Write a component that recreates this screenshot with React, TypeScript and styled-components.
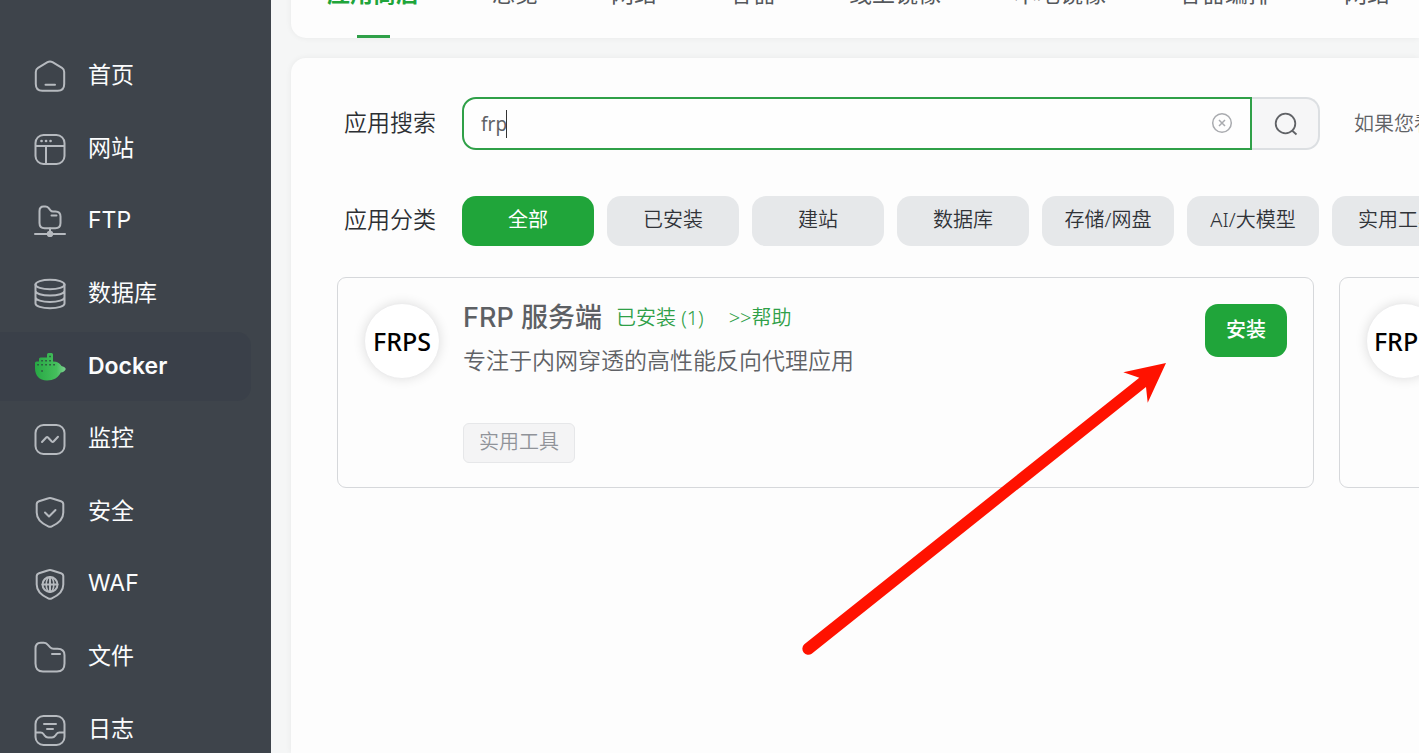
import React from 'react';
import styled, { createGlobalStyle, css } from 'styled-components';

const GlobalStyle = createGlobalStyle`
  * { box-sizing: border-box; }
  html, body { margin: 0; overflow: hidden; }
  body {
    background: #f5f6f6;
    color: #2c2f33;
    font-family: Inter, 'Noto Sans CJK SC', sans-serif;
  }
  button, input { font: inherit; }
  a { text-decoration: none; color: inherit; }
`;

const uiFont = css`
  font-family: 'Noto Sans', 'Noto Sans CJK SC', sans-serif;
`;

const Page = styled.div`
  display: flex;
  height: 100vh;
  overflow: hidden;
`;

const Sidebar = styled.nav`
  flex: 0 0 271px;
  display: flex;
  background: #3e444b;
`;

const Menu = styled.ul`
  flex: 1;
  display: flex;
  flex-direction: column;
  margin: 40px 20px -13px 0;
  padding: 0;
  list-style: none;
`;

const MenuItem = styled.li`
  flex: 1 0 68px;
  display: flex;
  padding: 2px 0;
`;

const MenuLink = styled.a<{ $active?: boolean }>`
  flex: 1;
  display: flex;
  align-items: center;
  gap: 22px;
  padding-left: 34px;
  border-radius: 0 14px 14px 0;
  background: ${(p) => (p.$active ? '#3a4049' : 'transparent')};
  color: #fbfcfd;
  font-size: 23px;
  line-height: 34px;
  font-weight: ${(p) => (p.$active ? 600 : 400)};
`;

const MenuText = styled.span`
  padding-bottom: 2px;
`;

const MenuSvg = styled.svg`
  flex: none;
  width: 32px;
  height: 32px;
  fill: none;
  stroke: #b6babf;
  stroke-width: 2;
  stroke-linecap: round;
  stroke-linejoin: round;
`;

const Main = styled.main`
  flex: 1;
  min-width: 0;
  display: flex;
  flex-direction: column;
  gap: 20px;
  padding-left: 20px;
  overflow: hidden;
`;

const TabBar = styled.div`
  flex: none;
  display: flex;
  gap: 1px;
  height: 88px;
  margin-top: -50px;
  border-radius: 0 0 0 15px;
  background: #fdfdfd;
  box-shadow: 0 0 6px rgba(0, 0, 0, 0.06);
`;

const Tab = styled.button<{ $active?: boolean }>`
  position: relative;
  flex: none;
  padding: 0 36px;
  border: 0;
  background: none;
  color: ${(p) => (p.$active ? '#20a53a' : '#55585c')};
  font-size: 23px;
  line-height: 34px;
  font-weight: ${(p) => (p.$active ? 700 : 400)};
  white-space: nowrap;

  &::after {
    content: '';
    position: absolute;
    bottom: 0;
    left: calc(50% - 16px);
    width: 33px;
    height: 3px;
    background: ${(p) => (p.$active ? '#2fa048' : 'transparent')};
  }
`;

const Panel = styled.section`
  flex: 1;
  display: flex;
  flex-direction: column;
  padding: 39px 0 0 46px;
  border-radius: 15px 0 0 0;
  background: #fdfdfd;
  box-shadow: 0 0 6px rgba(0, 0, 0, 0.06);
`;

const FilterRow = styled.div`
  flex: none;
  display: flex;
  align-items: center;
  padding-left: 7px;

  & + & {
    margin-top: 46px;
  }
`;

const RowLabel = styled.label`
  flex: none;
  width: 118px;
  padding-bottom: 2px;
  font-size: 23px;
  line-height: 34px;
  font-weight: 350;
`;

const SearchBox = styled.div`
  flex: 1;
  display: flex;
  height: 53px;
`;

const Field = styled.div`
  position: relative;
  flex: 1;
  display: flex;
`;

const SearchInput = styled.input`
  ${uiFont}
  flex: 1;
  min-width: 0;
  padding: 0 60px 0 17px;
  border: 2px solid #2fa048;
  border-radius: 14px 0 0 14px;
  outline: 0;
  background: #fefefe;
  color: #606266;
  font-size: 19px;
  caret-color: transparent;
`;

const Caret = styled.span`
  position: absolute;
  left: 44px;
  top: 13px;
  width: 1px;
  height: 28px;
  background: #333;
`;

const ClearButton = styled.button`
  position: absolute;
  right: 19px;
  top: 15px;
  width: 22px;
  height: 22px;
  padding: 0;
  border: 0;
  background: none;
  color: #a9abaf;
`;

const SearchButton = styled.button`
  flex: 0 0 68px;
  display: flex;
  align-items: center;
  justify-content: center;
  padding: 0;
  border: 2px solid #dcdfe2;
  border-left: 0;
  border-radius: 0 14px 14px 0;
  background: #f6f6f7;
  color: #606266;
`;

const GlyphSvg = styled.svg`
  display: block;
  fill: none;
  stroke: currentColor;
`;

const Hint = styled.span`
  flex: 0 0 65px;
  margin-left: 34px;
  overflow: hidden;
  white-space: nowrap;
  color: #606266;
  font-size: 20px;
  line-height: 34px;
  font-weight: 350;
`;

const Categories = styled.div`
  flex: 1;
  min-width: 0;
  display: flex;
  gap: 13px;
  overflow: hidden;
`;

const Category = styled.button<{ $active?: boolean }>`
  ${uiFont}
  flex: 0 0 132px;
  height: 50px;
  padding: 0 0 2px;
  border: 0;
  border-radius: 14px;
  background: ${(p) => (p.$active ? '#20a53a' : '#e6e8ea')};
  color: ${(p) => (p.$active ? '#fff' : '#303338')};
  font-size: 20px;
  line-height: 28px;
  font-weight: ${(p) => (p.$active ? 400 : 350)};
`;

const Cards = styled.div`
  display: grid;
  grid-auto-flow: column;
  grid-auto-columns: calc(100% - 105px);
  gap: 25px;
  margin-top: 31px;
`;

const Card = styled.article`
  position: relative;
  display: flex;
  align-items: flex-start;
  gap: 23px;
  min-height: 211px;
  padding: 23px 26px 24px;
  border: 1px solid #d6d8db;
  border-radius: 9px;
`;

const Logo = styled.div`
  flex: none;
  display: flex;
  align-items: center;
  justify-content: center;
  width: 76px;
  height: 76px;
  margin-top: 2px;
  border: 1px solid #ededee;
  border-radius: 50%;
  background: #fff;
  box-shadow: 0 0 12px rgba(0, 0, 0, 0.12);
  color: #000;
  font-family: 'Noto Sans', sans-serif;
  font-size: 25px;
  line-height: 34px;
  font-weight: 500;
`;

const CardBody = styled.div`
  flex: 1;
  min-width: 0;
`;

const TitleRow = styled.div`
  display: flex;
  align-items: center;
  height: 34px;
`;

const Title = styled.h2`
  margin: 0 14px 0 0;
  color: #5d6064;
  font-size: 27px;
  line-height: 34px;
  font-weight: 500;
  white-space: nowrap;
`;

const GreenLink = styled.a`
  ${uiFont}
  margin-right: 25px;
  color: #2fa048;
  font-size: 20px;
  line-height: 28px;
  font-weight: 350;
  white-space: nowrap;
`;

const Description = styled.p`
  margin: 9px 0 45px;
  color: #606266;
  font-size: 23px;
  line-height: 34px;
  font-weight: 350;
  white-space: nowrap;
`;

const Tag = styled.span`
  display: inline-block;
  padding: 4px 15px 6px;
  border: 1px solid #e6e7e9;
  border-radius: 6px;
  background: #f4f4f5;
  color: #909399;
  font-size: 20px;
  line-height: 28px;
  font-weight: 350;
`;

const InstallButton = styled.button`
  flex: none;
  width: 82px;
  height: 53px;
  margin-top: 3px;
  padding: 0 0 2px;
  border: 0;
  border-radius: 13px;
  background: #20a53a;
  color: #fff;
  font-size: 20px;
  line-height: 28px;
  font-weight: 500;
`;

const ArrowSvg = styled.svg`
  position: absolute;
  right: 143px;
  top: 82px;
  width: 370px;
  height: 300px;
  pointer-events: none;
`;

const icons: Record<string, React.ReactNode> = {
  home: (
    <>
      <path d="M13.5 2.2 4 7.8C2.2 8.9 1.8 10 1.8 12v12c0 4.500 2 6.800 6.500 6.800h15.400c4.500 0 6.500-2.300 6.500-6.800V12c0-2-.4-3.100-2.200-4.200l-9.500-5.600c-1.800-1-3.200-1-5 0Z" />
      <path d="M11.500 24.800h9.500" />
    </>
  ),
  site: (
    <>
      <rect x="1.500" y="2" width="29" height="29" rx="8" />
      <path d="M2 13h28M12 13v17.500" />
      <path d="M7.500 8h.1M12 8h.1M16.500 8h.1" strokeWidth="2.600" />
    </>
  ),
  ftp: (
    <>
      <path d="M5.500 6c0-3 1.300-4.500 4-4.500h2c1.300 0 2.200.4 3 1.400l2 2.400c.7.900 1.400 1.200 2.500 1.200h2.500c3.600 0 5 1.600 5 5v6.500c0 3.600-1.600 5.200-5.200 5.200H10.700c-3.600 0-5.200-1.600-5.200-5.200Z" />
      <path d="M17.500 10.500h5M16 23.500V28M1 29h30" />
      <circle cx="16" cy="29" r="2.200" fill="#b6babf" />
    </>
  ),
  database: (
    <>
      <ellipse cx="16" cy="6.500" rx="14.500" ry="4.800" />
      <path d="M1.500 6.500v19c0 2.700 6.500 4.800 14.500 4.800s14.500-2.100 14.500-4.800v-19M1.500 12.800c0 2.700 6.500 4.800 14.500 4.800s14.500-2.100 14.500-4.800M1.500 19.200c0 2.700 6.500 4.800 14.500 4.800s14.500-2.100 14.500-4.800" />
    </>
  ),
  docker: (
    <>
      <defs>
        <linearGradient id="whale" x1="0" y1="0" x2="1" y2="0">
          <stop offset="0" stopColor="#27a844" />
          <stop offset="0.700" stopColor="#45bf5c" />
          <stop offset="1" stopColor="#7fd093" />
        </linearGradient>
      </defs>
      <path
        d="M1 12q0-1.500 1.500-1.500H5V8q0-1.500 1.500-1.500H13V3.500Q13 2 14.500 2h3Q19 2 19 3.500v7l3 .2c2.500.8 4.500 2.300 5.500 4.300 2 .4 3.500 1.300 4.300 3-1 2.200-2.500 3.200-5 3.500C24.500 26.500 19.500 29.500 13 29.500 5 29.500 1 24.500 1 17Z"
        fill="url(#whale)"
        stroke="none"
      />
      <path
        d="M4 13.800h.1M8 13.800h.1M12 13.800h.1M16 13.800h.1M20 13.800h.1M8 9.800h.1M12 9.800h.1M16 9.800h.1M16 5.500h.1M8 20h.1"
        stroke="#2d5540"
        strokeWidth="1.600"
        strokeLinecap="square"
      />
    </>
  ),
  monitor: (
    <>
      <rect x="1.500" y="2" width="29" height="29" rx="8" />
      <path d="m8 19 4.200-4.500c.6-.6 1.200-.6 1.800 0l3.800 4c.6.6 1.200.6 1.800 0l4.400-4.700" />
    </>
  ),
  shield: (
    <>
      <path d="M14.500 2.300 5 5.200C3.200 5.800 2.700 6.500 2.700 8.300v8.200c0 6.500 5 11 11.500 13.800 1.300.6 2.300.6 3.600 0 6.500-2.800 11.500-7.300 11.500-13.800V8.300c0-1.800-.5-2.500-2.300-3.100l-9.500-2.900c-1.200-.4-1.800-.4-3 0Z" />
      <path d="m11 16.500 4 4 6.500-6.500" />
    </>
  ),
  waf: (
    <>
      <path d="M14.500 2.300 5 5.200C3.200 5.800 2.700 6.500 2.700 8.300v8.200c0 6.500 5 11 11.500 13.800 1.300.6 2.300.6 3.600 0 6.500-2.800 11.500-7.300 11.500-13.800V8.300c0-1.800-.5-2.500-2.300-3.100l-9.500-2.900c-1.200-.4-1.800-.4-3 0Z" />
      <circle cx="16" cy="16.500" r="7.500" />
      <path d="M8.500 16.500h15M16 9v15" />
      <ellipse cx="16" cy="16.500" rx="3.800" ry="7.500" strokeWidth="1.600" />
    </>
  ),
  folder: (
    <>
      <path d="M1.500 7.500c0-4 1.500-5.800 5.200-5.800h3c1.700 0 2.700.5 3.700 1.700l2.800 3c1 1.100 1.800 1.400 3.300 1.400h4c5 0 7 1.800 7 6.500v8.200c0 5.500-2 8-7.500 8H9c-5.500 0-7.500-2.500-7.500-8Z" />
      <path d="M18 13h8" />
    </>
  ),
  log: (
    <>
      <rect x="1.500" y="2" width="29" height="29" rx="8" />
      <path d="M10 10h12M13 15h6M2 18.500h4.500c1.500 0 2.300.4 3.200 1.700l1 1.500c1 1.300 1.800 1.800 3.300 1.800h4c1.500 0 2.300-.5 3.300-1.800l1-1.500c.9-1.300 1.700-1.700 3.200-1.700H30" />
    </>
  ),
};

const menu = [
  { icon: 'home', label: '首页' },
  { icon: 'site', label: '网站' },
  { icon: 'ftp', label: 'FTP' },
  { icon: 'database', label: '数据库' },
  { icon: 'docker', label: 'Docker' },
  { icon: 'monitor', label: '监控' },
  { icon: 'shield', label: '安全' },
  { icon: 'waf', label: 'WAF' },
  { icon: 'folder', label: '文件' },
  { icon: 'log', label: '日志' },
];

const tabs = ['应用商店', '总览', '网络', '容器', '线上镜像', '本地镜像', '容器编排', '网络'];

const categories = ['全部', '已安装', '建站', '数据库', '存储/网盘', 'AI/大模型', '实用工具'];

export default function App() {
  return (
    <Page>
      <GlobalStyle />
      <Sidebar>
        <Menu>
          {menu.map((item) => (
            <MenuItem key={item.icon}>
              <MenuLink href="#" $active={item.icon === 'docker'}>
                <MenuSvg viewBox="0 0 32 32" aria-hidden="true">
                  {icons[item.icon]}
                </MenuSvg>
                <MenuText>{item.label}</MenuText>
              </MenuLink>
            </MenuItem>
          ))}
        </Menu>
      </Sidebar>
      <Main>
        <TabBar>
          {tabs.map((label, i) => (
            <Tab key={i} type="button" $active={i === 0}>
              {label}
            </Tab>
          ))}
        </TabBar>
        <Panel>
          <FilterRow>
            <RowLabel htmlFor="app-search">应用搜索</RowLabel>
            <SearchBox>
              <Field>
                <SearchInput id="app-search" type="text" defaultValue="frp" />
                <Caret />
                <ClearButton type="button" aria-label="清除">
                  <GlyphSvg width="22" height="22" viewBox="0 0 22 22" strokeWidth="1.500">
                    <circle cx="11" cy="11" r="9.300" />
                    <path d="m8 8 6 6M14 8l-6 6" />
                  </GlyphSvg>
                </ClearButton>
              </Field>
              <SearchButton type="button" aria-label="搜索">
                <GlyphSvg width="26" height="26" viewBox="0 0 26 26" strokeWidth="1.800">
                  <circle cx="13.500" cy="12.500" r="9.800" />
                  <path d="m20 19.500 4.500 4" />
                </GlyphSvg>
              </SearchButton>
            </SearchBox>
            <Hint>如果您看</Hint>
          </FilterRow>
          <FilterRow>
            <RowLabel as="span">应用分类</RowLabel>
            <Categories>
              {categories.map((label, i) => (
                <Category key={label} type="button" $active={i === 0}>
                  {label}
                </Category>
              ))}
            </Categories>
          </FilterRow>
          <Cards>
            <Card>
              <Logo>FRPS</Logo>
              <CardBody>
                <TitleRow>
                  <Title>FRP 服务端</Title>
                  <GreenLink href="#">已安装 (1)</GreenLink>
                  <GreenLink href="#">&gt;&gt;帮助</GreenLink>
                </TitleRow>
                <Description>专注于内网穿透的高性能反向代理应用</Description>
                <Tag>实用工具</Tag>
              </CardBody>
              <InstallButton type="button">安装</InstallButton>
              <ArrowSvg viewBox="0 0 370 300" aria-hidden="true">
                <path
                  d="M4.300 284.300 339.300 17.700 323.300 12.300 366 3 347.700 42.700 346 27 11.700 293.700A6 6 0 0 1 4.300 284.300Z"
                  fill="#ff1200"
                />
              </ArrowSvg>
            </Card>
            <Card>
              <Logo>FRPC</Logo>
            </Card>
          </Cards>
        </Panel>
      </Main>
    </Page>
  );
}
